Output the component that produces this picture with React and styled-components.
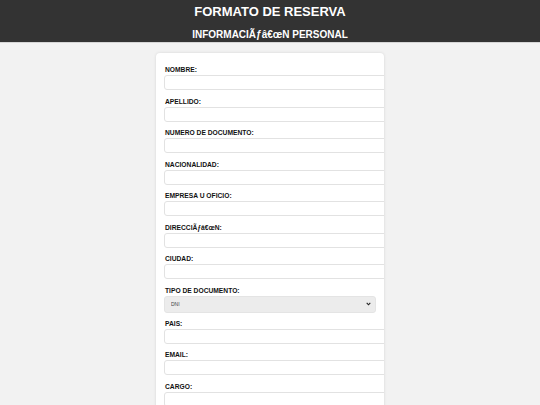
import React from "react";
import styled, { createGlobalStyle } from "styled-components";

const Global = createGlobalStyle`
  html, body { margin: 0; padding: 0; }
  body {
    background: #f2f2f2;
    font-family: "Liberation Sans", Arial, sans-serif;
    color: #222;
  }
`;

const Header = styled.header`
  background: #333333;
  color: #ffffff;
  text-align: center;
  padding: 4px 0 1px;
  border-bottom: 1px solid #d6d6d6;
`;

const Title = styled.h1`
  margin: 0;
  font-size: 13px;
  line-height: 16px;
  font-weight: bold;
`;

const Subtitle = styled.h2`
  margin: 9px 0 0;
  font-size: 10px;
  line-height: 12px;
  font-weight: bold;
`;

const Card = styled.form`
  width: 228px;
  box-sizing: border-box;
  margin: 10px auto 0;
  background: #ffffff;
  border-radius: 4px;
  box-shadow: 0 0 3px rgba(0, 0, 0, 0.12);
  padding: 13px 8px 4px;
  overflow: hidden;
`;

const Field = styled.div`
  margin-bottom: ${(p) => (p.$select ? "7px" : "7.5px")};
`;

const Label = styled.label`
  display: block;
  font-size: 6.7px;
  line-height: 8px;
  font-weight: bold;
  color: #111;
  padding-left: 1px;
  margin-bottom: 1px;
`;

const Input = styled.input`
  display: block;
  box-sizing: border-box;
  width: calc(100% + 12px);
  height: 15px;
  margin: 0;
  padding: 0 4px;
  border: 1px solid #e2e2e2;
  border-radius: 3px;
  background: #fff;
  outline: none;
`;

const SelectWrap = styled.div`
  position: relative;
  width: 100%;
`;

const Select = styled.select`
  display: block;
  box-sizing: border-box;
  width: 100%;
  height: 17px;
  margin: 0;
  padding: 0 0 0 6px;
  border: 1px solid #e4e4e4;
  border-radius: 3px;
  background: #ececec;
  color: #444;
  font-family: "Liberation Sans", Arial, sans-serif;
  font-size: 5px;
  appearance: none;
  -webkit-appearance: none;
  outline: none;
`;

const Chevron = styled.svg`
  position: absolute;
  right: 5px;
  top: 6px;
  width: 5px;
  height: 4px;
  pointer-events: none;
`;

const fieldsTop = [
  "NOMBRE:",
  "APELLIDO:",
  "NUMERO DE DOCUMENTO:",
  "NACIONALIDAD:",
  "EMPRESA U OFICIO:",
  "DIRECCIÃƒâ€œN:",
  "CIUDAD:",
];

const fieldsBottom = ["PAIS:", "EMAIL:", "CARGO:"];

export default function App() {
  return (
    <>
      <Global />
      <Header>
        <Title>FORMATO DE RESERVA</Title>
        <Subtitle>INFORMACIÃƒâ€œN PERSONAL</Subtitle>
      </Header>
      <Card>
        {fieldsTop.map((f) => (
          <Field key={f}>
            <Label>{f}</Label>
            <Input type="text" />
          </Field>
        ))}
        <Field $select>
          <Label>TIPO DE DOCUMENTO:</Label>
          <SelectWrap>
            <Select defaultValue="DNI">
              <option value="DNI">DNI</option>
              <option value="PASAPORTE">PASAPORTE</option>
            </Select>
            <Chevron viewBox="0 0 5 4">
              <path d="M0.7 0.8 L2.5 2.8 L4.3 0.8" fill="none" stroke="#222" strokeWidth="1.1" />
            </Chevron>
          </SelectWrap>
        </Field>
        {fieldsBottom.map((f) => (
          <Field key={f}>
            <Label>{f}</Label>
            <Input type="text" />
          </Field>
        ))}
      </Card>
    </>
  );
}
